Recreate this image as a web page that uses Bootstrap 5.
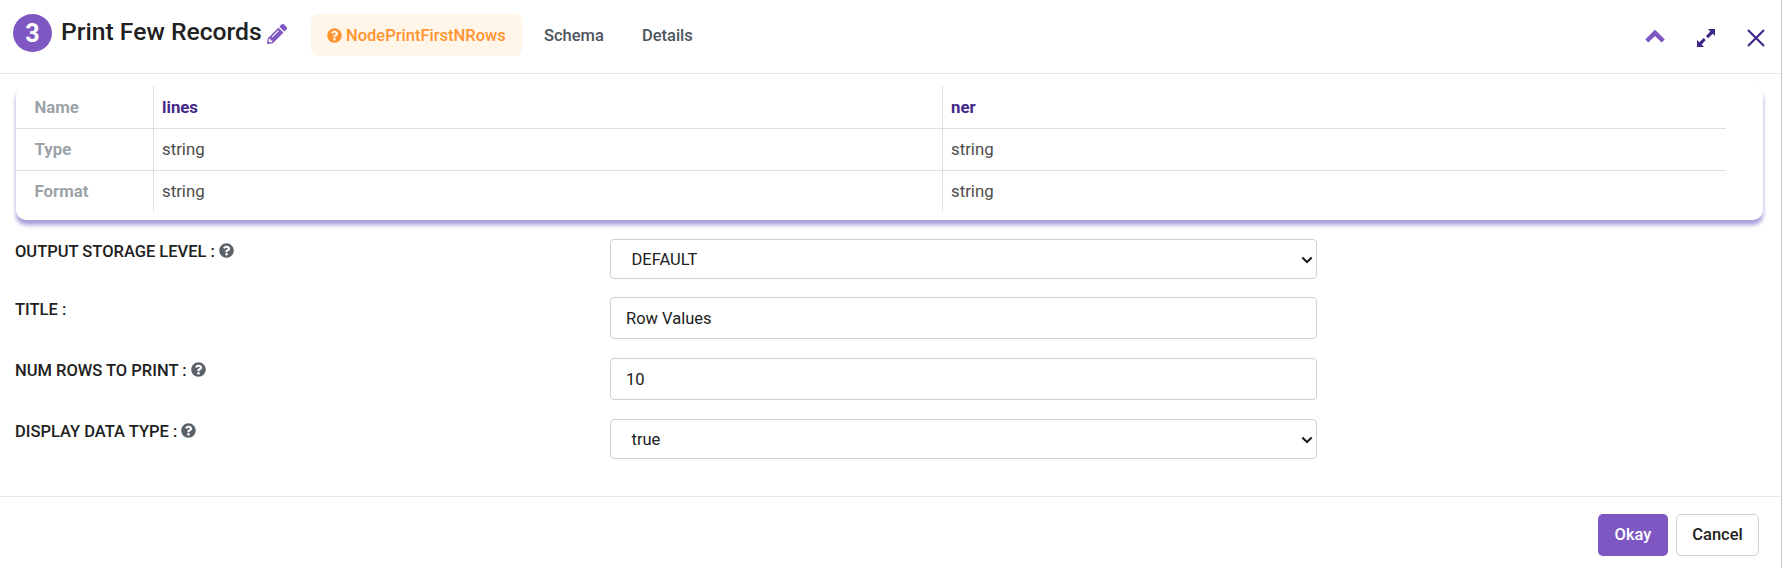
<!DOCTYPE html>
<html lang="en">
<head>
<meta charset="utf-8">
<meta name="viewport" content="width=device-width, initial-scale=1">
<title>Print Few Records</title>
<link href="https://cdn.jsdelivr.net/npm/bootstrap@5.3.0/dist/css/bootstrap.min.css" rel="stylesheet">
<style>
body{font-family:Roboto,"Liberation Sans",sans-serif;font-size:16.5px;color:#212121;height:568px;overflow:hidden}
.panel{height:568px;border-right:1px solid #c9c9cd}
.panel-head{height:74px;border-bottom:1px solid #e7e8ec;padding:14px 16px 0 13px}
.step{width:39px;height:38px;background:#7e57c2;color:#fff;font-size:25px;font-weight:700;padding-top:1px}
.node-title{font-size:24.7px;font-weight:500;line-height:36px;width:205px;margin:0 0 0 9px;color:#212121}
.pencil{margin:10px 0 0 1px}
.tabs{margin-left:24px;gap:6px}
.tabs .nav-link{height:42px;padding:0 16px;border-radius:8px;font-weight:500;line-height:43px;color:#4d555e}
.tabs .nav-link.active{background:#fff5e9;color:#ff9431;width:211px;white-space:nowrap}
.tabs svg{margin:0 4px 3px 0}
.schema-card{height:134px;margin:12px 18px 0 16px;border-radius:10px;box-shadow:0 4.5px 4px #a79edb;padding-right:37px}
.schema-table{table-layout:fixed;width:1710px;margin:0;border-collapse:separate;border-spacing:0;color:#4c4c4c}
.schema-table th,.schema-table td{font-size:16.8px;height:42px;padding:0 8px 1px;border:0 solid #dcdfe6;vertical-align:middle;line-height:24px}
.schema-table th:first-child{padding-left:18.5px;color:#9ca3a8;font-weight:700}
.schema-table tr+tr>*{border-top-width:1px;padding-bottom:2px}
.schema-table tr>*+*{border-left-width:1px}
.schema-table .field-name{color:#43288a;font-weight:700}
.form-grid{display:grid;grid-template-columns:595px 707px;grid-template-rows:39px 42px 42px 40px;row-gap:19px;margin:19px 0 0 15px}
.form-grid label{font-weight:500;line-height:24px;padding-top:1px}
.form-grid label svg{margin:0 0 4px}
.field{border:1px solid #ccd0d8;border-radius:4px;background:#fff;color:#212121;font-size:16.5px;width:707px;height:42px;padding:0 15px;display:block}
.pick{height:40px;padding:2px 3px 0 20.5px;display:flex;align-items:center;justify-content:space-between}
.pick svg{margin-bottom:1px}
.panel-foot{height:72px;border-top:1px solid #e4e8ee;padding:17px 22px 0 0}
.panel-foot .btn{height:42px;font-size:16.500px;font-weight:500;border-radius:5px;padding:0}
.ok,.ok:hover{width:70px;background:#7e57c2;color:#fff}
.no{width:83px;border:1px solid #cdd3dc;color:#212121}
.window-tools{height:46px}
.expand-icon{margin:1px 0 0 8px}
.close-icon{margin:2px 0 0 32px}
</style>
</head>
<body>
<svg width="0" height="0" class="position-absolute"><defs>
<symbol id="help" viewBox="0 0 512 512"><path fill="currentColor" d="M504 256c0 137-111 248-248 248S8 393 8 256 119 8 256 8s248 111 248 248zM262.700 90c-54.500 0-89.300 23-116.500 63.800-3.500 5.300-2.400 12.400 2.700 16.300l34.700 26.300c5.200 3.900 12.600 3 16.700-2.100 17.900-22.700 30.100-35.800 57.300-35.800 20.400 0 45.700 13.100 45.700 33 0 15-12.400 22.700-32.500 34C247.100 238.500 216 254.900 216 296v4c0 6.600 5.400 12 12 12h56c6.600 0 12-5.400 12-12v-1.300c0-28.500 83.200-29.600 83.200-106.700 0-58-60.200-102-116.500-102zM256 338c-25.400 0-46 20.600-46 46s20.600 46 46 46 46-20.600 46-46-20.600-46-46-46z"/></symbol>
</defs></svg>
<div class="panel d-flex flex-column">
  <header class="panel-head d-flex align-items-start flex-shrink-0">
    <span class="step rounded-circle d-flex align-items-center justify-content-center">3</span>
    <h1 class="node-title text-nowrap">Print Few Records</h1>
    <svg class="pencil" width="20" height="20" viewBox="0 0 512 512" fill="#7e57c2"><path fill-rule="evenodd" d="M498 142l-46 46c-5 5-12 5-17 0L324 77c-5-5-5-12 0-17l46-46c19-19 49-19 68 0l60 60c19 19 19 49 0 68zM284 100L22 362 0 484c-3 17 11 31 28 28l122-21 262-263c5-5 5-12 0-17L301 100c-5-5-12-5-17 0zM124 340c-6-6-6-14 0-20l154-154c6-6 14-6 20 0s6 14 0 20L144 340c-6 6-14 6-20 0zM88 424h48v36l-64 12-32-32 12-64h36z"/></svg>
    <nav class="tabs nav">
      <a class="nav-link active"><svg width="15" height="15"><use href="#help"/></svg>NodePrintFirstNRows</a>
      <a class="nav-link">Schema</a>
      <a class="nav-link">Details</a>
    </nav>
    <div class="window-tools ms-auto d-flex align-items-center">
      <svg width="20" height="14" viewBox="0 0 20 14" class="me-4"><path d="M1.800 11L10 2.800L18.200 11" fill="none" stroke="#7e57c2" stroke-width="4.500"/></svg>
      <svg width="18" height="18" viewBox="0 0 18 18" class="expand-icon" fill="#43288a"><path d="M11 0H18V7L15.800 4.800L11.200 9.300L9 7.100L13.300 2.500zM0 11L2.300 13.200L6.600 8.900L8.800 11.100L4.700 15.500L7 18H0z"/></svg>
      <svg width="18" height="18" viewBox="0 0 18 18" class="close-icon"><path d="M1 1L17 17M17 1L1 17" stroke="#43288a" stroke-width="2.200"/></svg>
    </div>
  </header>
  <main class="flex-grow-1">
    <section class="schema-card">
      <table class="schema-table">
        <colgroup><col style="width:137px"><col style="width:789px"><col></colgroup>
        <tbody>
          <tr><th>Name</th><td class="field-name">lines</td><td class="field-name">ner</td></tr>
          <tr><th>Type</th><td>string</td><td>string</td></tr>
          <tr><th>Format</th><td>string</td><td>string</td></tr>
        </tbody>
      </table>
    </section>
    <form class="form-grid">
      <label>OUTPUT STORAGE LEVEL : <svg width="15" height="15" color="#5a6169"><use href="#help"/></svg></label>
      <div class="field pick" role="combobox">DEFAULT<svg width="12" height="8" viewBox="0 0 12 8"><path d="M1.300 1.500L6 6L10.700 1.500" fill="none" stroke="#212121" stroke-width="2.200"/></svg></div>
      <label>TITLE :</label>
      <input class="field" value="Row Values">
      <label>NUM ROWS TO PRINT : <svg width="15" height="15" color="#5a6169"><use href="#help"/></svg></label>
      <input class="field" value="10">
      <label>DISPLAY DATA TYPE : <svg width="15" height="15" color="#5a6169"><use href="#help"/></svg></label>
      <div class="field pick" role="combobox">true<svg width="12" height="8" viewBox="0 0 12 8"><path d="M1.300 1.500L6 6L10.700 1.500" fill="none" stroke="#212121" stroke-width="2.200"/></svg></div>
    </form>
  </main>
  <footer class="panel-foot d-flex justify-content-end gap-2 flex-shrink-0">
    <button class="btn ok">Okay</button>
    <button class="btn no">Cancel</button>
  </footer>
</div>
<script src="https://cdn.jsdelivr.net/npm/bootstrap@5.3.0/dist/js/bootstrap.bundle.min.js"></script>
</body>
</html>
